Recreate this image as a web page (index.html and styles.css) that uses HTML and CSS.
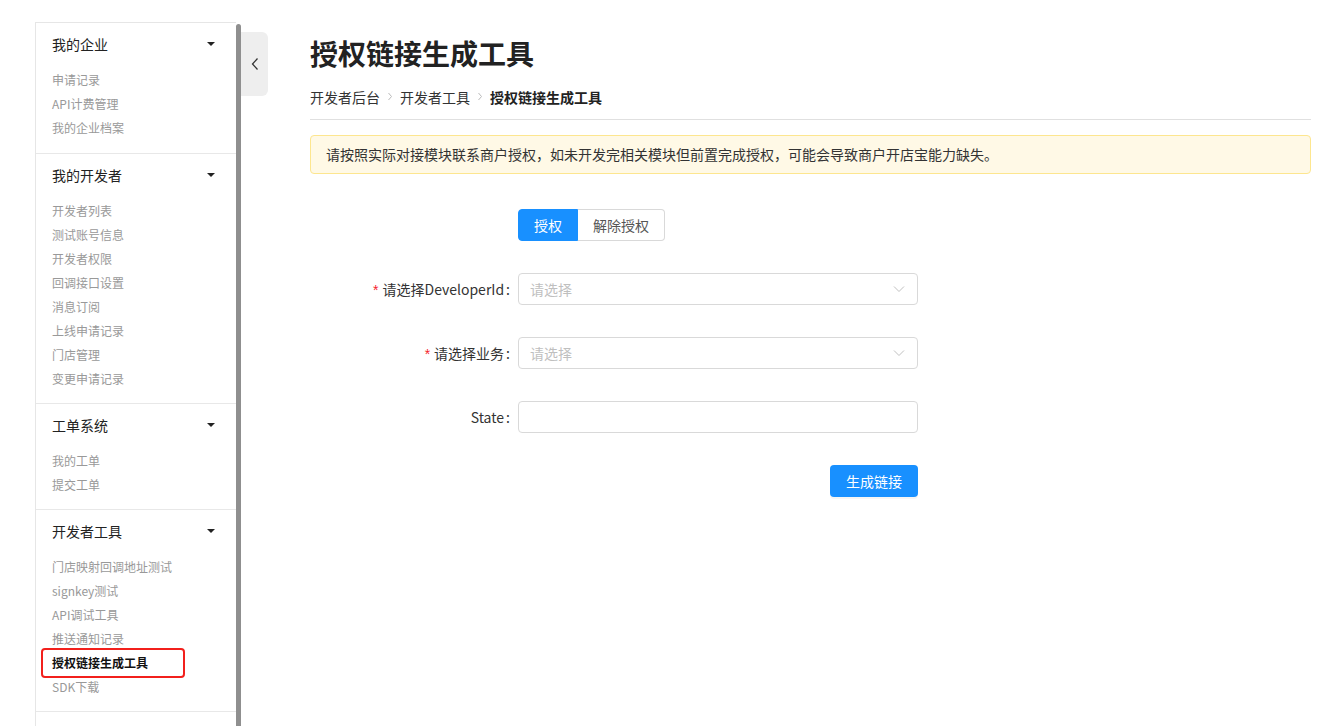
FILE: index.html
```html
<!DOCTYPE html>
<html lang="zh-CN">
<head>
<meta charset="utf-8">
<title>授权链接生成工具</title>
<link rel="stylesheet" href="styles.css">
</head>
<body>
<div class="page">
  <aside class="sidebar">
    <nav class="menu">
      <section class="group first">
        <div class="group-head"><span>我的企业</span><i class="caret"></i></div>
        <ul class="items">
          <li>申请记录</li>
          <li>API计费管理</li>
          <li>我的企业档案</li>
        </ul>
      </section>
      <section class="group">
        <div class="group-head"><span>我的开发者</span><i class="caret"></i></div>
        <ul class="items">
          <li>开发者列表</li>
          <li>测试账号信息</li>
          <li>开发者权限</li>
          <li>回调接口设置</li>
          <li>消息订阅</li>
          <li>上线申请记录</li>
          <li>门店管理</li>
          <li>变更申请记录</li>
        </ul>
      </section>
      <section class="group">
        <div class="group-head"><span>工单系统</span><i class="caret"></i></div>
        <ul class="items">
          <li>我的工单</li>
          <li>提交工单</li>
        </ul>
      </section>
      <section class="group">
        <div class="group-head"><span>开发者工具</span><i class="caret"></i></div>
        <ul class="items">
          <li>门店映射回调地址测试</li>
          <li>signkey测试</li>
          <li>API调试工具</li>
          <li>推送通知记录</li>
          <li class="active">授权链接生成工具</li>
          <li>SDK下载</li>
        </ul>
      </section>
    </nav>
    <div class="scrollbar"></div>
  </aside>
  <button class="toggle" type="button" aria-label="收起">
    <svg width="10" height="14" viewBox="0 0 10 14"><polyline points="7.5,1.5 2.5,7 7.5,12.5" fill="none" stroke="#333" stroke-width="1.3"/></svg>
  </button>
  <main class="main">
    <h1 class="title">授权链接生成工具</h1>
    <div class="breadcrumb">
      <span>开发者后台</span>
      <svg class="sep" width="6" height="9" viewBox="0 0 6 9"><polyline points="1.5,1 4.5,4.5 1.5,8" fill="none" stroke="#bbb" stroke-width="1"/></svg>
      <span>开发者工具</span>
      <svg class="sep" width="6" height="9" viewBox="0 0 6 9"><polyline points="1.5,1 4.5,4.5 1.5,8" fill="none" stroke="#bbb" stroke-width="1"/></svg>
      <span class="current">授权链接生成工具</span>
    </div>
    <div class="alert">请按照实际对接模块联系商户授权，如未开发完相关模块但前置完成授权，可能会导致商户开店宝能力缺失。</div>
    <form class="form">
      <div class="row">
        <div class="label"></div>
        <div class="control">
          <div class="radio-group">
            <span class="radio on">授权</span><span class="radio">解除授权</span>
          </div>
        </div>
      </div>
      <div class="row">
        <div class="label"><span class="req">*</span>请选择DeveloperId<span class="colon">:</span></div>
        <div class="control">
          <div class="select"><span class="ph">请选择</span>
            <svg width="12" height="8" viewBox="0 0 12 8"><polyline points="1,1.5 6,6.5 11,1.5" fill="none" stroke="#c0c0c0" stroke-width="1"/></svg>
          </div>
        </div>
      </div>
      <div class="row">
        <div class="label"><span class="req">*</span>请选择业务<span class="colon">:</span></div>
        <div class="control">
          <div class="select"><span class="ph">请选择</span>
            <svg width="12" height="8" viewBox="0 0 12 8"><polyline points="1,1.5 6,6.5 11,1.5" fill="none" stroke="#c0c0c0" stroke-width="1"/></svg>
          </div>
        </div>
      </div>
      <div class="row">
        <div class="label">State<span class="colon">:</span></div>
        <div class="control"><div class="input"></div></div>
      </div>
      <div class="row btn-row">
        <div class="label"></div>
        <div class="control end"><span class="btn">生成链接</span></div>
      </div>
    </form>
  </main>
</div>
</body>
</html>
```
FILE: styles.css
```css
*, *::before, *::after { box-sizing: border-box; }
html, body { margin: 0; padding: 0; overflow: hidden; background: #fff; }
body {
  font-family: "Noto Sans CJK SC", "Noto Sans", sans-serif;
  color: #333;
  font-size: 14px;
}
ul { list-style: none; margin: 0; padding: 0; }

.page {
  display: flex;
  align-items: flex-start;
  padding: 22px 0 0 35px;
  height: 726px;
}

/* sidebar */
.sidebar {
  display: flex;
  width: 206px;
  height: 704px;
  overflow: hidden;
  flex: none;
}
.menu {
  width: 201px;
  border-left: 1px solid #e6e6e6;
  border-top: 1px solid #e6e6e6;
}
.group {
  padding: 10px 0 12px 16px;
  border-bottom: 1px solid #e8e8e8;
}
.group.first { padding-bottom: 13px; }
.group-head {
  display: flex;
  align-items: center;
  justify-content: space-between;
  height: 22px;
  line-height: 22px;
  padding-right: 21px;
  font-size: 14px;
  color: #222;
  margin-bottom: 13px;
}
.caret {
  width: 0;
  height: 0;
  border-left: 4px solid transparent;
  border-right: 4px solid transparent;
  border-top: 4px solid #222;
}
.items li {
  height: 24px;
  line-height: 24px;
  font-size: 12px;
  color: #999;
}
.items li.active {
  position: relative;
  color: #111;
  font-weight: bold;
}
.items li.active::after {
  content: "";
  position: absolute;
  left: -11px;
  top: -3px;
  width: 144px;
  height: 30px;
  border: 2px solid #f2201c;
  border-radius: 4px;
}
.scrollbar {
  width: 5px;
  margin-top: 2px;
  background: #8f8f8f;
  border-radius: 3px 3px 0 0;
}

.toggle {
  flex: none;
  width: 27px;
  height: 64px;
  margin-top: 10px;
  padding: 0;
  border: none;
  background: #eeeeee;
  border-radius: 0 6px 6px 0;
  display: flex;
  align-items: center;
  justify-content: center;
}

/* main */
.main {
  flex: none;
  width: 1001px;
  margin-left: 42px;
  padding-top: 11px;
}
.title {
  margin: 0 0 13px;
  font-size: 28px;
  line-height: 40px;
  font-weight: bold;
  color: #222;
}
.breadcrumb {
  display: flex;
  align-items: center;
  height: 34px;
  padding-bottom: 12px;
  border-bottom: 1px solid #e0e0e0;
  font-size: 14px;
  line-height: 22px;
  color: #333;
}
.breadcrumb .sep { margin: 0 7px; }
.breadcrumb .current { font-weight: bold; color: #222; }

.alert {
  margin-top: 15px;
  height: 39px;
  padding: 0 15px;
  line-height: 37px;
  background: #fff9e6;
  border: 1px solid #fde68f;
  border-radius: 4px;
  font-size: 14px;
  color: #333;
}

.form { margin-top: 35px; }
.row {
  display: flex;
  align-items: center;
  height: 32px;
  margin-bottom: 32px;
}
.btn-row { margin-top: 1px; }
.label {
  width: 208px;
  flex: none;
  text-align: right;
  font-size: 14px;
  color: #333;
  line-height: 32px;
}
.req {
  color: #f5222d;
  margin-right: 4px;
  font-family: "Liberation Sans", sans-serif;
}
.colon { margin: 0 8px 0 2px; }
.control { width: 400px; flex: none; display: flex; }
.control.end { justify-content: flex-end; }

.radio-group { display: flex; }
.radio {
  height: 32px;
  line-height: 30px;
  padding: 0 15px;
  border: 1px solid #d9d9d9;
  color: #555;
  font-size: 14px;
  background: #fff;
}
.radio:first-child { border-radius: 4px 0 0 4px; }
.radio:last-child { border-radius: 0 4px 4px 0; border-left: none; }
.radio.on { background: #1890ff; border-color: #1890ff; color: #fff; }

.select, .input {
  width: 400px;
  height: 32px;
  border: 1px solid #d9d9d9;
  border-radius: 4px;
  background: #fff;
}
.select {
  display: flex;
  align-items: center;
  justify-content: space-between;
  padding: 0 12px 0 11px;
}
.ph { color: #bfbfbf; font-size: 14px; }

.btn {
  display: inline-block;
  height: 32px;
  line-height: 32px;
  padding: 0 16px;
  background: #1890ff;
  color: #fff;
  border-radius: 4px;
  font-size: 14px;
  box-shadow: 0 2px 0 rgba(0,0,0,0.04);
}
```
